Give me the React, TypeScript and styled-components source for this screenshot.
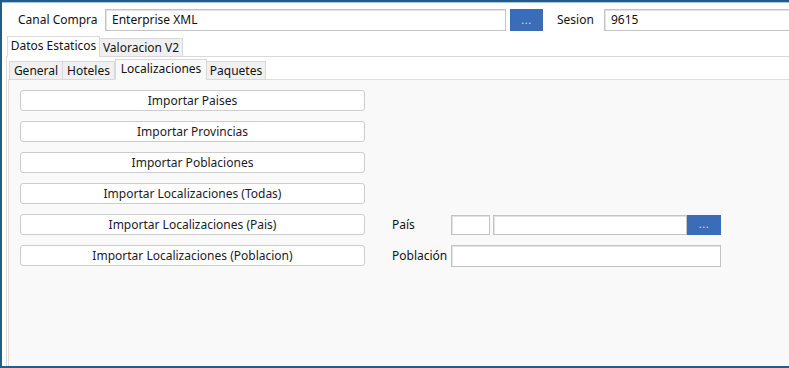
import React from "react";
import styled, { createGlobalStyle } from "styled-components";

const Global = createGlobalStyle`
  html, body { margin: 0; padding: 0; background: #ffffff; }
  body { font-family: "Noto Sans", "Open Sans", sans-serif; font-size: 12px; color: #141414; }
  * { box-sizing: border-box; }
`;

const Window = styled.div`
  width: 789px;
  height: 368px;
  overflow: hidden;
  background: #ffffff;
  border-top: 2px solid #1d5f86;
  border-left: 2px solid #1d5f86;
  border-bottom: 2px solid #1d5f86;
  box-shadow: inset 0 1px 0 #a9c3d6;
  display: flex;
  flex-direction: column;
`;

const Header = styled.div`
  display: flex;
  align-items: center;
  height: 22px;
  margin-top: 7px;
  padding-left: 16px;
  white-space: nowrap;
`;

const Label = styled.span<{ $w: number; $ml?: number }>`
  width: ${(p) => p.$w}px;
  margin-left: ${(p) => p.$ml ?? 0}px;
  flex: none;
  line-height: 22px;
`;

const TextBox = styled.div<{ $w: number; $h?: number }>`
  width: ${(p) => p.$w}px;
  height: ${(p) => p.$h ?? 22}px;
  flex: none;
  background: #ffffff;
  border: 1px solid #c4c4c4;
  box-shadow: inset 1px 1px 0 #e2e2e2;
  padding: 0 6px;
  line-height: 20px;
  color: #111;
`;

const DotsButton = styled.div<{ $w: number; $h?: number; $ml?: number }>`
  width: ${(p) => p.$w}px;
  height: ${(p) => p.$h ?? 22}px;
  margin-left: ${(p) => p.$ml ?? 0}px;
  flex: none;
  background: #3b6cb7;
  color: #d6e0f2;
  font-size: 11px;
  display: flex;
  align-items: center;
  justify-content: center;
  letter-spacing: 0.5px;
  padding-bottom: 2px;
`;

const OuterTabs = styled.div`
  margin-top: 6px;
  margin-left: 4px;
  flex: 1;
  display: flex;
  flex-direction: column;
`;

const TabStrip = styled.div<{ $ml: number }>`
  display: flex;
  align-items: flex-end;
  margin-left: ${(p) => p.$ml}px;
  height: 20px;
  position: relative;
  z-index: 1;
  margin-bottom: -1px;
`;

const Tab = styled.div<{ $active?: boolean; $w: number }>`
  width: ${(p) => p.$w}px;
  height: ${(p) => (p.$active ? 21 : 19)}px;
  border: 1px solid #d9d9d9;
  border-bottom: ${(p) => (p.$active ? "1px solid transparent" : "1px solid #d9d9d9")};
  background: ${(p) => (p.$active ? "#ffffff" : "#f0f0f0")};
  margin-left: ${(p) => (p.$active ? 0 : -1)}px;
  display: flex;
  align-items: center;
  justify-content: center;
  white-space: nowrap;
  color: #141414;
  padding-bottom: ${(p) => (p.$active ? 2 : 0)}px;
  &:first-child { margin-left: 0; }
`;

const InnerTab = styled(Tab)<{ $active?: boolean }>`
  background: ${(p) => (p.$active ? "#f9f9f9" : "#f0f0f0")};
`;

const OuterPage = styled.div`
  flex: 1;
  border: 1px solid #d9d9d9;
  border-right: none;
  border-bottom: none;
  background: #ffffff;
  display: flex;
  flex-direction: column;
  padding: 3px 0 0 1px;
`;

const InnerPage = styled.div`
  flex: 1;
  border: 1px solid #dedede;
  border-right: none;
  border-bottom: none;
  background: #f9f9f9;
  padding: 10px 0 0 11px;
  display: grid;
  grid-template-columns: 345px 86px auto;
  grid-auto-rows: 21px;
  row-gap: 10px;
  column-gap: 0;
  align-content: start;
`;

const ActionButton = styled.div`
  grid-column: 1;
  height: 21px;
  background: #ffffff;
  border: 1px solid #cdcdcd;
  border-radius: 3px;
  display: flex;
  align-items: center;
  justify-content: center;
  color: #231a28;
  white-space: nowrap;
`;

const FormLabel = styled.span`
  grid-column: 2;
  padding-left: 27px;
  line-height: 21px;
  white-space: nowrap;
`;

const FieldGroup = styled.div`
  grid-column: 3;
  display: flex;
  align-items: center;
  gap: 3px;
`;

const buttons = [
  "Importar Paises",
  "Importar Provincias",
  "Importar Poblaciones",
  "Importar Localizaciones (Todas)",
];

export default function App() {
  return (
    <>
      <Global />
      <Window>
        <Header>
          <Label $w={87}>Canal Compra</Label>
          <TextBox $w={401}>Enterprise XML</TextBox>
          <DotsButton $w={33} $ml={4}>...</DotsButton>
          <Label $w={47} $ml={14}>Sesion</Label>
          <TextBox $w={220}>9615</TextBox>
        </Header>
        <OuterTabs>
          <TabStrip $ml={1}>
            <Tab $active $w={93}>Datos Estaticos</Tab>
            <Tab $w={84}>Valoracion V2</Tab>
          </TabStrip>
          <OuterPage>
            <TabStrip $ml={1}>
              <InnerTab $w={54}>General</InnerTab>
              <InnerTab $w={53}>Hoteles</InnerTab>
              <InnerTab $active $w={92}>Localizaciones</InnerTab>
              <InnerTab $w={60}>Paquetes</InnerTab>
            </TabStrip>
            <InnerPage>
              {buttons.map((b) => (
                <ActionButton key={b}>{b}</ActionButton>
              ))}
              <ActionButton>Importar Localizaciones (Pais)</ActionButton>
              <FormLabel>País</FormLabel>
              <FieldGroup>
                <TextBox $w={39} $h={20} />
                <TextBox $w={194} $h={20} />
                <DotsButton $w={34} $h={20} $ml={-3}>...</DotsButton>
              </FieldGroup>
              <ActionButton>Importar Localizaciones (Poblacion)</ActionButton>
              <FormLabel>Población</FormLabel>
              <FieldGroup>
                <TextBox $w={270} $h={22} />
              </FieldGroup>
            </InnerPage>
          </OuterPage>
        </OuterTabs>
      </Window>
    </>
  );
}
